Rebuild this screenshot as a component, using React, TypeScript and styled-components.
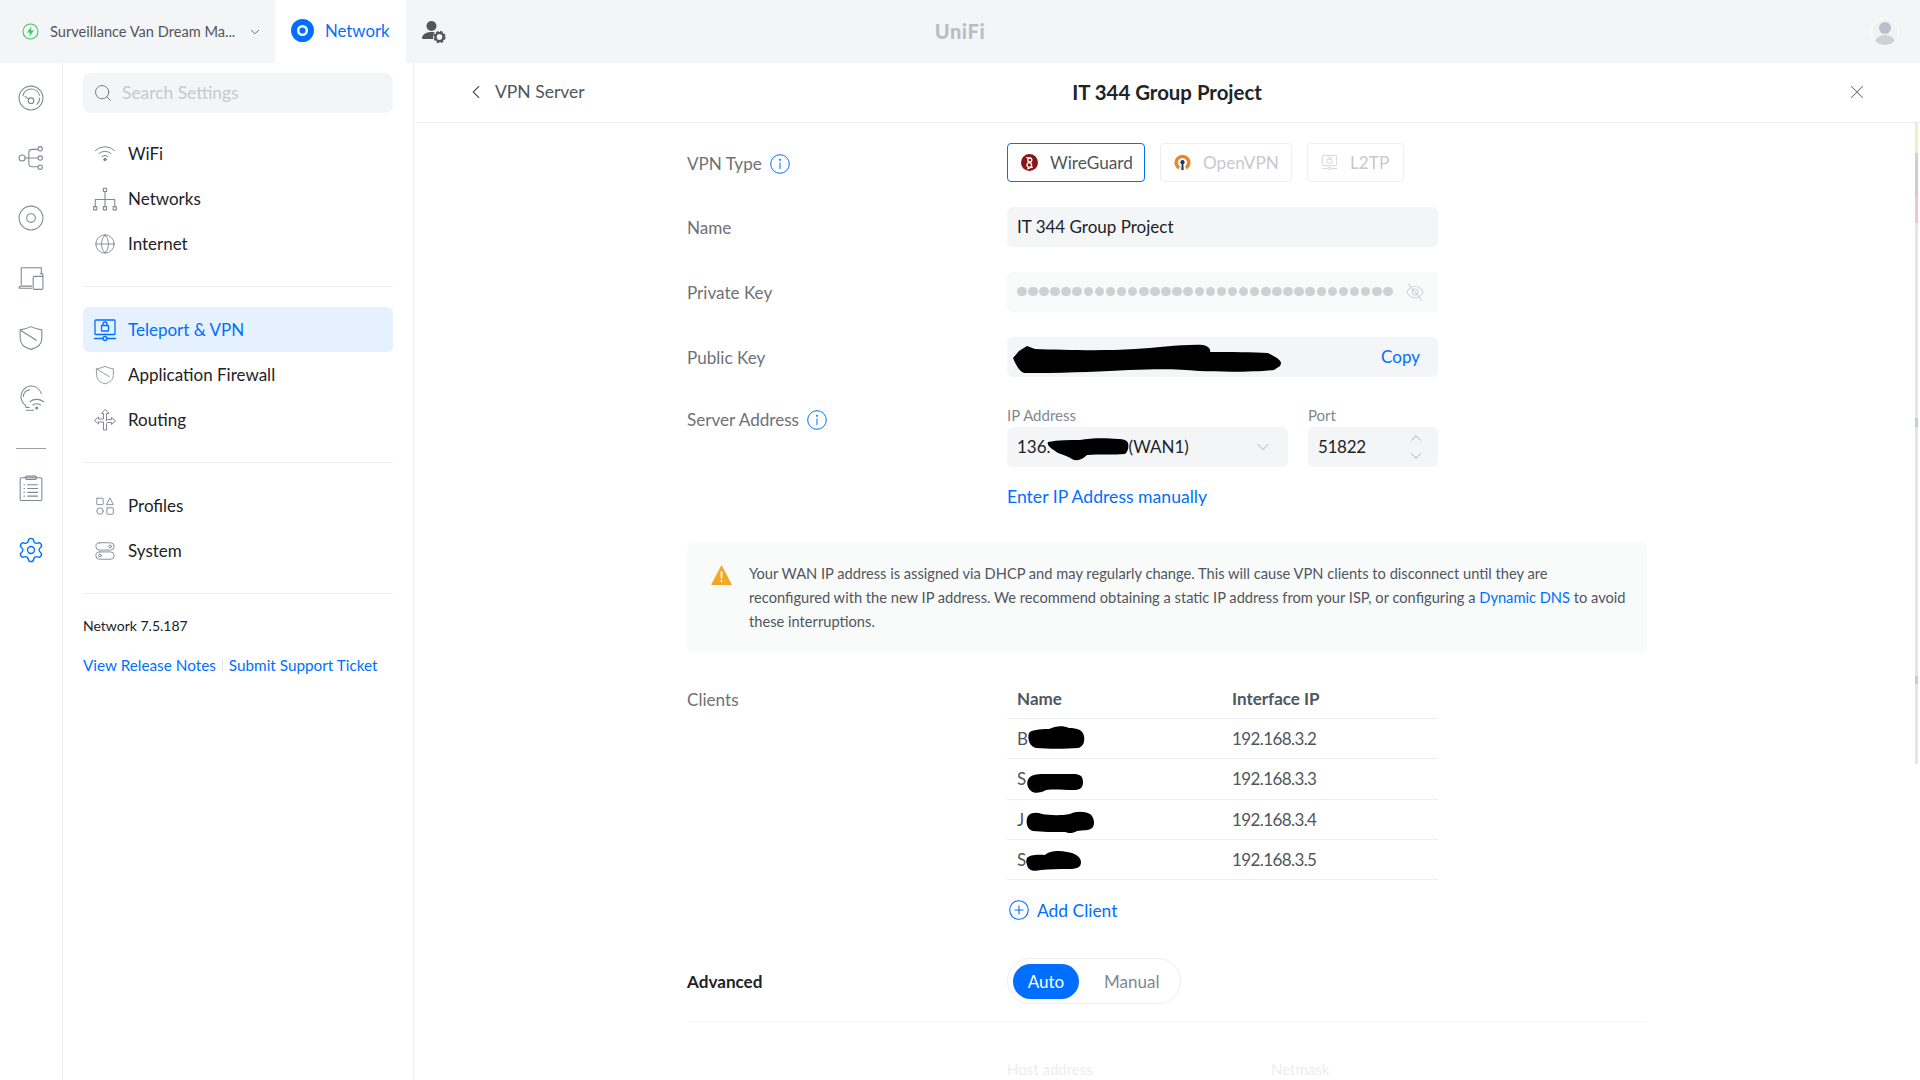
import React from 'react'
import styled, { createGlobalStyle } from 'styled-components'
import { ChevronDown, ChevronLeft, ChevronUp, Globe, Search, Settings, X } from 'lucide-react'

const BLUE = '#006fff'
const ICON = '#808893'

const GlobalStyle = createGlobalStyle`
  html, body {
    margin: 0;
    height: 100%;
    overflow: hidden;
    background: #fff;
  }
  body {
    font-family: 'Lato', 'Noto Sans', sans-serif;
    color: #212327;
  }
  * {
    box-sizing: border-box;
  }
`

const Line = ({ size = 24, children }: { size?: number; children: React.ReactNode }) => (
  <svg width={size} height={size} viewBox="0 0 24 24" fill="none" stroke="currentColor" strokeWidth="1" strokeLinecap="round" strokeLinejoin="round">
    {children}
  </svg>
)

const GaugeIcon = () => (
  <Line size={26}>
    <circle cx="12" cy="12" r="11" />
    <path d="M4.5 10a8 8 0 0 1 15.500-.5M20 12a8 8 0 0 1-2.500 5.800" />
    <circle cx="12" cy="14.500" r="2.600" />
    <path d="M10 13 6.500 10.500" />
  </Line>
)
const TopologyIcon = () => (
  <Line size={26}>
    <circle cx="3.800" cy="12" r="2.800" />
    <path d="M6.600 12h12M10 12V7a3 3 0 0 1 3-3h5M10 12v5a3 3 0 0 0 3 3h5" />
    <circle cx="20.500" cy="3.500" r="2" />
    <circle cx="20.500" cy="12" r="2" />
    <circle cx="20.500" cy="20.500" r="2" />
  </Line>
)
const DiscIcon = () => (
  <Line size={26}>
    <circle cx="12" cy="12" r="11" />
    <circle cx="12" cy="12" r="4" />
  </Line>
)
const DevicesIcon = () => (
  <Line size={26}>
    <path d="M3 18V2.500h18.500V8M1 21.500h11.500M1 21.500c0-1.200.6-2 2-2h9.500" />
    <rect x="14" y="10.500" width="9" height="12" rx="1" />
    <path d="M20.500 8h2.500v3" />
  </Line>
)
const ShieldIcon = ({ size = 26 }: { size?: number }) => (
  <Line size={size}>
    <path d="M2 4.500C6 4 9 3 12 1.500c3 1.500 6 2.500 10 3v8c0 5-4 8.500-10 10-6-1.500-10-5-10-10z" />
    <path d="M2.500 5 17 14" />
  </Line>
)
const InsightIcon = () => (
  <Line size={26}>
    <path d="M7.500 20.500c-.3-1.500-1-2.500-2.500-3.500a10 10 0 0 1 6-16c5-.4 9 2.500 10.500 7" />
    <path d="M5 10.500a6 6 0 0 1 5.500-6" />
    <path d="M11 15.500a10 10 0 0 1 12.500 0M13.800 18.500a6 6 0 0 1 7 0" />
    <circle cx="17.300" cy="21.300" r=".9" fill="currentColor" />
    <path d="M7.500 23.300h7M7.500 20.800h3" />
  </Line>
)
const ClipboardIcon = () => (
  <Line size={26}>
    <rect x="2" y="2.500" width="20" height="21" rx="1" />
    <rect x="7" y="1" width="10" height="3" rx="1" />
    <path d="M9 9h9M9 12.500h9M9 16h9M9 19.500h9M5.500 9h.5M5.500 12.500h.5M5.500 16h.5M5.500 19.500h.5" />
  </Line>
)
const WifiIcon = () => (
  <Line size={24}>
    <path d="M2.500 8.500a13.500 13.500 0 0 1 19 0M6 11.500a9 9 0 0 1 12 0M9 14.500a4.500 4.500 0 0 1 6 0" />
    <circle cx="12" cy="17.500" r="1.300" fill="currentColor" />
  </Line>
)
const TreeIcon = () => (
  <Line size={26}>
    <rect x="10.500" y="2" width="3" height="3" />
    <rect x="1.500" y="19" width="3" height="3" />
    <rect x="10.500" y="19" width="3" height="3" />
    <rect x="19.500" y="19" width="3" height="3" />
    <path d="M12 5v14M3 19v-6.500h18V19" />
  </Line>
)
const TeleportIcon = () => (
  <Line size={24}>
    <rect x="2" y="2" width="20" height="14.500" rx=".8" strokeWidth="1.300" />
    <rect x="8.500" y="7.500" width="7" height="5.500" rx=".6" strokeWidth="1.300" />
    <path d="M10 7.500V6a2 2 0 0 1 4 0v1.500M1.500 20.500h8.500M14 20.500h8.500" strokeWidth="1.300" />
    <circle cx="12" cy="20.500" r="2" strokeWidth="1.300" />
  </Line>
)
const RoutingIcon = () => (
  <Line size={24}>
    <path d="M12 1.500 8.500 5.500h2V11H5.500V9L1.500 12.500l4 3.500v-2h5v8h3v-6c0-1 .5-1.500 1.500-1.500h3.500v2l4-3.500-4-3.500v2H15c-.8 0-1.500.3-1.500 1.500V5.500h2z" />
  </Line>
)
const ProfilesIcon = () => (
  <Line size={22}>
    <rect x="3" y="3.500" width="7" height="7" rx=".5" />
    <path d="M17.500 3.500 21 10.500h-7z" />
    <circle cx="6.500" cy="17.500" r="3.500" />
    <rect x="14" y="14" width="7" height="7" rx=".5" />
  </Line>
)
const SystemIcon = () => (
  <Line size={22}>
    <rect x="2" y="3" width="20" height="8" rx="4" />
    <rect x="2" y="13" width="20" height="8" rx="4" />
    <circle cx="17.500" cy="7" r="1.500" />
    <circle cx="6.500" cy="17" r="1.500" />
  </Line>
)
const InfoIcon = () => (
  <svg width="20" height="20" viewBox="0 0 20 20" fill="none" stroke={BLUE} strokeWidth="1">
    <circle cx="10" cy="10" r="9.300" />
    <path d="M10 8.500V15" />
    <circle cx="10" cy="5.800" r=".6" fill={BLUE} />
  </svg>
)
const EyeOffIcon = () => (
  <svg width="20" height="20" viewBox="0 0 24 24" fill="none" stroke="#d3d5d8" strokeWidth="1.300">
    <path d="M2 12c3-5 6.500-7 10-7s7 2 10 7c-3 5-6.500 7-10 7s-7-2-10-7z" />
    <circle cx="12" cy="12" r="3.500" />
    <path d="M4 2l16 20" />
  </svg>
)
const BoltIcon = () => (
  <svg width="17" height="17" viewBox="0 0 17 17">
    <circle cx="8.500" cy="8.500" r="7.500" fill="none" stroke="#38cc65" strokeWidth="1.100" />
    <path d="M9.500 3.500 5 9.500h3L7.300 13.500l4.700-6H9z" fill="#38cc65" />
  </svg>
)
const NetworkLogo = () => (
  <svg width="23" height="23" viewBox="0 0 23 23">
    <circle cx="11.500" cy="11.500" r="11.500" fill={BLUE} />
    <circle cx="11.500" cy="11.500" r="4.300" fill="none" stroke="#fff" strokeWidth="2.400" />
  </svg>
)
const AdminIcon = () => (
  <svg width="24" height="24" viewBox="0 0 24 24" fill="#50565e">
    <circle cx="9.500" cy="6" r="5" />
    <path d="M0 18.500C0 14.500 4 12 9.500 12c1.200 0 2.300.1 3.300.4-1.500 1.700-2.100 3.800-1.600 6.600H1c-.6 0-1-.2-1-.5z" />
    <circle cx="17.500" cy="17" r="4.600" fill="none" stroke="#50565e" strokeWidth="3" strokeDasharray="2.400 1.200" />
    <circle cx="17.500" cy="17" r="4" fill="none" stroke="#50565e" strokeWidth="2.200" />
  </svg>
)
const WireGuardLogo = () => (
  <svg width="17" height="17" viewBox="0 0 17 17">
    <circle cx="8.500" cy="8.500" r="8.500" fill="#88171a" />
    <circle cx="8.800" cy="6" r="2" fill="none" stroke="#fff" strokeWidth="1.300" />
    <circle cx="8.300" cy="11" r="2.300" fill="none" stroke="#fff" strokeWidth="1.300" />
    <path d="M5 3.500 11 4.500M6 15l6-2" stroke="#fff" strokeWidth="1" />
  </svg>
)
const OpenVpnLogo = () => (
  <svg width="17" height="17" viewBox="0 0 17 17">
    <path d="M4.300 15.500a8 8 0 1 1 8.400 0l-1.700-3a4.600 4.600 0 1 0-5 0z" fill="#e9852b" />
    <circle cx="8.500" cy="8.200" r="2.100" fill="#1c3a66" />
    <path d="M7.700 9h1.600l.4 7H7.300z" fill="#1c3a66" />
  </svg>
)
const L2tpIcon = () => (
  <svg width="17" height="17" viewBox="0 0 24 24" fill="none" stroke="#d0d2d5" strokeWidth="1.200">
    <rect x="2" y="2" width="20" height="14.500" rx=".8" />
    <rect x="8.500" y="7.500" width="7" height="5.500" rx=".6" />
    <path d="M10 7.500V6a2 2 0 0 1 4 0v1.500M1.500 20.500h8.500M14 20.500h8.500" />
    <circle cx="12" cy="20.500" r="2" />
  </svg>
)
const WarningIcon = () => (
  <svg width="21" height="20" viewBox="0 0 21 20">
    <path d="M10.500 0 21 20H0z" fill="#f5a623" />
    <path d="M9.500 6.500h2l-.3 7h-1.400z" fill="#fff" />
    <circle cx="10.500" cy="16" r="1.100" fill="#fff" />
  </svg>
)
const AddIcon = () => (
  <svg width="20" height="20" viewBox="0 0 20 20" fill="none" stroke={BLUE} strokeWidth="1.100">
    <circle cx="10" cy="10" r="9.300" />
    <path d="M10 5.500v9M5.500 10h9" />
  </svg>
)

const Scribble = styled.svg<{ $left: number; $top: number }>`
  position: absolute;
  left: ${(p) => p.$left}px;
  top: ${(p) => p.$top}px;
`

const Page = styled.div`
  width: 1920px;
  height: 1080px;
  overflow: hidden;
  display: flex;
  flex-direction: column;
`

const TopBar = styled.header`
  height: 63px;
  flex: none;
  background: #f4f5f7;
  display: grid;
  grid-template-columns: 1fr auto 1fr;
  align-items: center;
`
const TopLeft = styled.div`
  display: flex;
  height: 100%;
  align-items: center;
`
const SiteSelect = styled.div`
  width: 275px;
  padding-left: 22px;
  display: flex;
  align-items: center;
  font-size: 14.6px;
  color: #50565e;
`
const SiteName = styled.span`
  margin-left: 11px;
  width: 188px;
  white-space: nowrap;
`
const SiteChevron = styled(ChevronDown)`
  margin-left: 10px;
  color: #50565e;
`
const AppTab = styled.div`
  width: 131px;
  height: 100%;
  background: #fff;
  display: flex;
  align-items: center;
  gap: 11px;
  padding: 0 0 2px 16px;
  color: ${BLUE};
  font-size: 16.8px;
`
const AdminLink = styled.div`
  margin-left: 16px;
  display: flex;
  color: #50565e;
`
const UnifiMark = styled.div`
  font-size: 20px;
  font-weight: 900;
  letter-spacing: 0.6px;
  padding-bottom: 2px;
  color: #b9bec6;
`
const TopRight = styled.div`
  display: flex;
  justify-content: flex-end;
  padding-right: 21px;
`
const Avatar = styled.div`
  width: 28px;
  height: 28px;
  border-radius: 50%;
  border: 1px solid #fff;
  background: #f1f2f4;
  overflow: hidden;
  position: relative;
  display: flex;
  flex-direction: column;
  align-items: center;
  justify-content: flex-end;
  gap: 1px;
  &::before {
    content: '';
    width: 12px;
    height: 12px;
    border-radius: 50%;
    background: #b9c0ca;
  }
  &::after {
    content: '';
    width: 22px;
    height: 10px;
    border-radius: 11px 11px 0 0;
    background: #cdd2d9;
  }
`

const Body = styled.div`
  flex: 1;
  display: flex;
  min-height: 0;
`

const Rail = styled.nav`
  width: 63px;
  flex: none;
  border-right: 1px solid #edeef0;
  padding-top: 5px;
  display: flex;
  flex-direction: column;
  align-items: center;
`
const RailItem = styled.div<{ $active?: boolean }>`
  height: 60px;
  display: flex;
  align-items: center;
  justify-content: center;
  color: ${(p) => (p.$active ? BLUE : ICON)};
  margin-top: ${(p) => (p.$active ? '2px' : 0)};
`
const RailRule = styled.div`
  width: 30px;
  height: 1px;
  background: #9a9fa8;
  margin: 20px 0 9px;
`

const Sidebar = styled.aside`
  width: 351px;
  flex: none;
  border-right: 1px solid #edeef0;
  padding: 10px 20px 0;
`
const SearchBox = styled.div`
  height: 40px;
  border-radius: 8px;
  background: #f4f5f7;
  display: flex;
  align-items: center;
  gap: 9px;
  padding: 0 0 2px 10px;
  margin-bottom: 18px;
  color: #c6c9ce;
  font-size: 17.4px;
`
const SearchGlyph = styled(Search)`
  color: #6e7178;
  margin-top: 2px;
`
const NavItem = styled.div<{ $active?: boolean }>`
  height: 45px;
  display: flex;
  align-items: center;
  border-radius: 6px;
  font-size: 17px;
  color: ${(p) => (p.$active ? BLUE : '#212327')};
  background: ${(p) => (p.$active ? '#e5f1ff' : 'transparent')};
`
const NavIcon = styled.span<{ $active?: boolean }>`
  width: 45px;
  padding-right: 2px;
  display: flex;
  justify-content: center;
  color: ${(p) => (p.$active ? BLUE : ICON)};
`
const Rule = styled.div`
  height: 1px;
  background: #edeef0;
  margin: 20px 0;
`
const Version = styled.div`
  font-size: 14px;
  line-height: 20px;
  margin-top: 22px;
`
const LinkRow = styled.div`
  margin-top: 19px;
  line-height: 20px;
  font-size: 15.3px;
  color: ${BLUE};
  display: flex;
  align-items: center;
  gap: 6px;
`
const LinkSep = styled.span`
  width: 1px;
  height: 12px;
  background: #e3e5e8;
`

const Main = styled.main`
  flex: 1;
  min-width: 0;
  position: relative;
`
const MainHeader = styled.div`
  height: 60px;
  border-bottom: 1px solid #edeef0;
  display: grid;
  grid-template-columns: 1fr auto 1fr;
  align-items: center;
  padding: 0 52px 2px;
`
const BackLink = styled.div`
  display: flex;
  align-items: center;
  gap: 8px;
  font-size: 17.5px;
  color: #50565e;
`
const BackChevron = styled(ChevronLeft)`
  margin-left: -1px;
`
const Title = styled.h1`
  margin: 0;
  font-size: 20.4px;
  font-weight: 700;
  color: #212327;
`
const CloseSlot = styled.div`
  display: flex;
  justify-content: flex-end;
  color: #6e7178;
`
const Form = styled.div`
  width: 960px;
  margin: 0 auto;
  padding-top: 20px;
`
const Row = styled.div<{ $top?: number; $align?: string }>`
  display: grid;
  grid-template-columns: 320px 431px;
  align-items: ${(p) => p.$align || 'center'};
  margin-top: ${(p) => p.$top || 0}px;
`
const Label = styled.div<{ $strong?: boolean; $offset?: number }>`
  font-size: 17.1px;
  display: flex;
  align-items: center;
  gap: 8px;
  margin-top: ${(p) => p.$offset || 0}px;
  color: ${(p) => (p.$strong ? '#212327' : '#6e7178')};
  font-weight: ${(p) => (p.$strong ? 700 : 400)};
`
const TypeGroup = styled.div`
  display: flex;
  gap: 15px;
`
const TypeButton = styled.div<{ $active?: boolean; $width: number }>`
  width: ${(p) => p.$width}px;
  height: 39px;
  border-radius: 4px;
  border: 1px solid ${(p) => (p.$active ? BLUE : '#edeef0')};
  color: ${(p) => (p.$active ? '#50565e' : '#c6c9ce')};
  font-size: 17.2px;
  display: flex;
  align-items: center;
  gap: 12px;
  padding: 0 0 1px 13px;
`
const Field = styled.div<{ $muted?: boolean }>`
  position: relative;
  height: 40px;
  border-radius: 6px;
  background: ${(p) => (p.$muted ? '#f9fafa' : '#f4f5f7')};
  display: flex;
  align-items: center;
  justify-content: space-between;
  padding: 0 10px 1px;
  font-size: 17px;
  color: #212327;
`
const Dots = styled.div`
  display: flex;
  gap: 1.6px;
`
const Dot = styled.span`
  width: 9.5px;
  height: 9.5px;
  border-radius: 50%;
  background: #cfd0d2;
`
const EyeSlot = styled.span`
  display: flex;
  margin-right: 3px;
`
const CopyLink = styled.span`
  margin-left: auto;
  margin-right: 8px;
  color: ${BLUE};
`
const AddressGrid = styled.div`
  display: grid;
  grid-template-columns: 281px 130px;
  column-gap: 20px;
`
const SmallLabel = styled.div`
  font-size: 15px;
  line-height: 20px;
  color: #808893;
  margin-bottom: 2px;
`
const WanLabel = styled.span`
  margin-left: 78px;
  margin-right: auto;
`
const SelectChevron = styled(ChevronDown)`
  margin-right: 5px;
  color: #a5a9af;
`
const PortValue = styled.span`
  letter-spacing: -0.3px;
`
const Stepper = styled.div`
  display: flex;
  flex-direction: column;
  margin-right: 3px;
  color: #8b9097;
`
const FieldLink = styled.a`
  grid-column: 2;
  font-size: 17.6px;
  line-height: 20px;
  color: ${BLUE};
  margin-top: 20px;
`
const Notice = styled.div`
  margin-top: 35px;
  height: 111px;
  border-radius: 6px;
  background: #f9fafa;
  padding: 20px 24px;
  display: flex;
  gap: 17px;
  font-size: 14.66px;
  line-height: 24px;
  color: #50565e;
  white-space: nowrap;
`
const NoticeIcon = styled.div`
  flex: none;
  padding-top: 3px;
`
const InlineLink = styled.span`
  color: ${BLUE};
`
const TableHead = styled.div`
  display: grid;
  grid-template-columns: 215px 1fr;
  height: 40px;
  padding-left: 10px;
  align-items: center;
  font-size: 17px;
  font-weight: 700;
  color: #50565e;
  border-bottom: 1px solid #edeef0;
`
const TableRow = styled.div`
  position: relative;
  display: grid;
  grid-template-columns: 215px 1fr;
  height: 40.3px;
  padding-left: 10px;
  align-items: center;
  font-size: 17px;
  color: #50565e;
  border-bottom: 1px solid #edeef0;
`
const IpCell = styled.span`
  letter-spacing: -0.6px;
`
const AddClient = styled.div`
  grid-column: 2;
  margin-top: 19px;
  height: 22px;
  padding-left: 2px;
  display: flex;
  align-items: center;
  gap: 8px;
  font-size: 17.4px;
  color: ${BLUE};
`
const Toggle = styled.div`
  width: 174px;
  height: 46px;
  border-radius: 23px;
  border: 1px solid #edeef0;
  padding: 5px;
  display: flex;
  align-items: center;
  font-size: 17px;
`
const ToggleOption = styled.div<{ $active?: boolean }>`
  width: ${(p) => (p.$active ? '66px' : 'auto')};
  height: 35px;
  border-radius: 18px;
  margin-left: ${(p) => (p.$active ? 0 : '25px')};
  display: flex;
  align-items: center;
  justify-content: center;
  background: ${(p) => (p.$active ? BLUE : 'transparent')};
  color: ${(p) => (p.$active ? '#fff' : '#808893')};
`
const FormRule = styled.div`
  height: 1px;
  background: #f7f7f8;
  margin-top: 17px;
`
const FadedRow = styled.div`
  display: grid;
  grid-template-columns: 320px 264px 1fr;
  margin-top: 38px;
  font-size: 15px;
  color: #eceded;
`
const ScrollTrack = styled.div`
  position: absolute;
  top: 59px;
  right: 2px;
  width: 3px;
  height: 642px;
  background: #e6e6e6;
  display: flex;
  flex-direction: column;
`
const ScrollMark = styled.div<{ $h: number; $c: string }>`
  flex: none;
  height: ${(p) => p.$h}px;
  background: ${(p) => p.$c};
`

const marks: [number, string][] = [
  [31, '#efeecb'],
  [7, '#dccbdc'],
  [36, '#cfc8e0'],
  [27, '#ecc8c8'],
  [195, '#e6e6e6'],
  [9, '#bccfe0'],
  [249, '#e6e6e6'],
  [8, '#bccfe0'],
]

const clients: { ip: string; initial: string; mark: React.ReactNode }[] = [
  {
    ip: '192.168.3.2',
    initial: 'B',
    mark: (
      <Scribble $left={20} $top={6} width="58" height="24" viewBox="0 0 58 24">
        <path d="M2 8c2-3 10-4 20-4 6-3 14-4 20-1 8 0 14 2 15 8s-1 11-6 12c-12 1-30 1-42 0C3 22 0 14 2 8z" />
      </Scribble>
    ),
  },
  {
    ip: '192.168.3.3',
    initial: 'S',
    mark: (
      <Scribble $left={19} $top={13} width="58" height="21" viewBox="0 0 58 21">
        <path d="M3 6c3-4 10-4 18-4h26c7 0 10 2 10 8s-3 8-9 8c-12 0-18-1-28 0-5 3-12 4-15 1C1 16 0 10 3 6z" />
      </Scribble>
    ),
  },
  {
    ip: '192.168.3.4',
    initial: 'J',
    mark: (
      <Scribble $left={18} $top={11} width="70" height="23" viewBox="0 0 70 23">
        <path d="M3 5c3-4 9-4 14-2 6 1 18 2 28 0 6-3 14-3 20 0 4 3 5 9 3 13-3 4-10 3-16 4-5 3-9 2-12 1-12 0-23 0-32-1C2 19 0 10 3 5z" />
      </Scribble>
    ),
  },
  {
    ip: '192.168.3.5',
    initial: 'S',
    mark: (
      <Scribble $left={18} $top={10} width="57" height="22" viewBox="0 0 57 22">
        <path d="M2 8c2-3 10-4 18-3 4-4 14-5 22-3 8 1 14 5 14 10 0 6-5 7-12 7-10 0-20 0-28 1-8 2-13 0-14-5-1-3-1-5 0-7z" />
      </Scribble>
    ),
  },
]

export default function App() {
  return (
    <Page>
      <GlobalStyle />
      <TopBar>
        <TopLeft>
          <SiteSelect>
            <BoltIcon />
            <SiteName>Surveillance Van Dream Ma...</SiteName>
            <SiteChevron size={14} strokeWidth={1.5} />
          </SiteSelect>
          <AppTab>
            <NetworkLogo />
            Network
          </AppTab>
          <AdminLink>
            <AdminIcon />
          </AdminLink>
        </TopLeft>
        <UnifiMark>UniFi</UnifiMark>
        <TopRight>
          <Avatar />
        </TopRight>
      </TopBar>
      <Body>
        <Rail>
          <RailItem><GaugeIcon /></RailItem>
          <RailItem><TopologyIcon /></RailItem>
          <RailItem><DiscIcon /></RailItem>
          <RailItem><DevicesIcon /></RailItem>
          <RailItem><ShieldIcon /></RailItem>
          <RailItem><InsightIcon /></RailItem>
          <RailRule />
          <RailItem><ClipboardIcon /></RailItem>
          <RailItem $active><Settings size={28} strokeWidth={1.2} /></RailItem>
        </Rail>
        <Sidebar>
          <SearchBox>
            <SearchGlyph size={20} strokeWidth={1.1} />
            Search Settings
          </SearchBox>
          <NavItem><NavIcon><WifiIcon /></NavIcon>WiFi</NavItem>
          <NavItem><NavIcon><TreeIcon /></NavIcon>Networks</NavItem>
          <NavItem><NavIcon><Globe size={22} strokeWidth={1} /></NavIcon>Internet</NavItem>
          <Rule />
          <NavItem $active><NavIcon $active><TeleportIcon /></NavIcon>Teleport &amp; VPN</NavItem>
          <NavItem><NavIcon><ShieldIcon size={20} /></NavIcon>Application Firewall</NavItem>
          <NavItem><NavIcon><RoutingIcon /></NavIcon>Routing</NavItem>
          <Rule />
          <NavItem><NavIcon><ProfilesIcon /></NavIcon>Profiles</NavItem>
          <NavItem><NavIcon><SystemIcon /></NavIcon>System</NavItem>
          <Rule />
          <Version>Network 7.5.187</Version>
          <LinkRow>
            View Release Notes
            <LinkSep />
            Submit Support Ticket
          </LinkRow>
        </Sidebar>
        <Main>
          <MainHeader>
            <BackLink>
              <BackChevron size={22} strokeWidth={1.2} />
              VPN Server
            </BackLink>
            <Title>IT 344 Group Project</Title>
            <CloseSlot>
              <X size={22} strokeWidth={1.1} />
            </CloseSlot>
          </MainHeader>
          <Form>
            <Row>
              <Label $offset={2}>VPN Type <InfoIcon /></Label>
              <TypeGroup>
                <TypeButton $active $width={138}><WireGuardLogo />WireGuard</TypeButton>
                <TypeButton $width={132}><OpenVpnLogo />OpenVPN</TypeButton>
                <TypeButton $width={97}><L2tpIcon />L2TP</TypeButton>
              </TypeGroup>
            </Row>
            <Row $top={25}>
              <Label>Name</Label>
              <Field>IT 344 Group Project</Field>
            </Row>
            <Row $top={25}>
              <Label>Private Key</Label>
              <Field $muted>
                <Dots>
                  {Array.from(Array(34)).map((_, i) => (
                    <Dot key={i} />
                  ))}
                </Dots>
                <EyeSlot><EyeOffIcon /></EyeSlot>
              </Field>
            </Row>
            <Row $top={25}>
              <Label>Public Key</Label>
              <Field>
                <Scribble $left={6} $top={6} width="268" height="30" viewBox="0 0 268 30">
                  <path d="M6 8 14 3l8 3c30 1 70 2 100 0 20-1 50-5 68-4 6 1 8 5 7 7 20 0 44 0 58 1l9 5c4 3 5 5 3 8l-6 4c-20 2-50 2-75 1-20-2-40-2-70-1-25 1-55 3-95 3l-10 0C6 28 3 22 0 15z" />
                </Scribble>
                <CopyLink>Copy</CopyLink>
              </Field>
            </Row>
            <Row $top={28} $align="start">
              <Label $offset={4}>Server Address <InfoIcon /></Label>
              <AddressGrid>
                <div>
                  <SmallLabel>IP Address</SmallLabel>
                  <Field>
                    136.
                    <Scribble $left={40} $top={10} width="82" height="24" viewBox="0 0 82 24">
                      <path d="M1 5c10-2 22-2 32-2 10-2 26-2 38-1 5 0 9 1 10 4 1 3 0 9-3 11-12 1-25 0-38 1-4 4-10 7-15 4-3-2-8-4-14-6-4-3-12-7-10-11z" />
                    </Scribble>
                    <WanLabel>(WAN1)</WanLabel>
                    <SelectChevron size={20} strokeWidth={1.1} />
                  </Field>
                </div>
                <div>
                  <SmallLabel>Port</SmallLabel>
                  <Field>
                    <PortValue>51822</PortValue>
                    <Stepper>
                      <ChevronUp size={18} strokeWidth={1} />
                      <ChevronDown size={18} strokeWidth={1} />
                    </Stepper>
                  </Field>
                </div>
              </AddressGrid>
            </Row>
            <Row>
              <span />
              <FieldLink>Enter IP Address manually</FieldLink>
            </Row>
            <Notice>
              <NoticeIcon><WarningIcon /></NoticeIcon>
              <div>
                Your WAN IP address is assigned via DHCP and may regularly change. This will cause VPN clients to disconnect until they are
                <br />
                reconfigured with the new IP address. We recommend obtaining a static IP address from your ISP, or configuring a <InlineLink>Dynamic DNS</InlineLink> to avoid
                <br />
                these interruptions.
              </div>
            </Notice>
            <Row $top={26} $align="start">
              <Label $offset={10}>Clients</Label>
              <div>
                <TableHead>
                  <span>Name</span>
                  <span>Interface IP</span>
                </TableHead>
                {clients.map((c) => (
                  <TableRow key={c.ip}>
                    <span>{c.initial}</span>
                    <IpCell>{c.ip}</IpCell>
                    {c.mark}
                  </TableRow>
                ))}
              </div>
            </Row>
            <Row>
              <span />
              <AddClient><AddIcon />Add Client</AddClient>
            </Row>
            <Row $top={37}>
              <Label $strong>Advanced</Label>
              <Toggle>
                <ToggleOption $active>Auto</ToggleOption>
                <ToggleOption>Manual</ToggleOption>
              </Toggle>
            </Row>
            <FormRule />
            <FadedRow>
              <span />
              <span>Host address</span>
              <span>Netmask</span>
            </FadedRow>
          </Form>
          <ScrollTrack>
            {marks.map(([h, c], i) => (
              <ScrollMark key={i} $h={h} $c={c} />
            ))}
          </ScrollTrack>
        </Main>
      </Body>
    </Page>
  )
}
